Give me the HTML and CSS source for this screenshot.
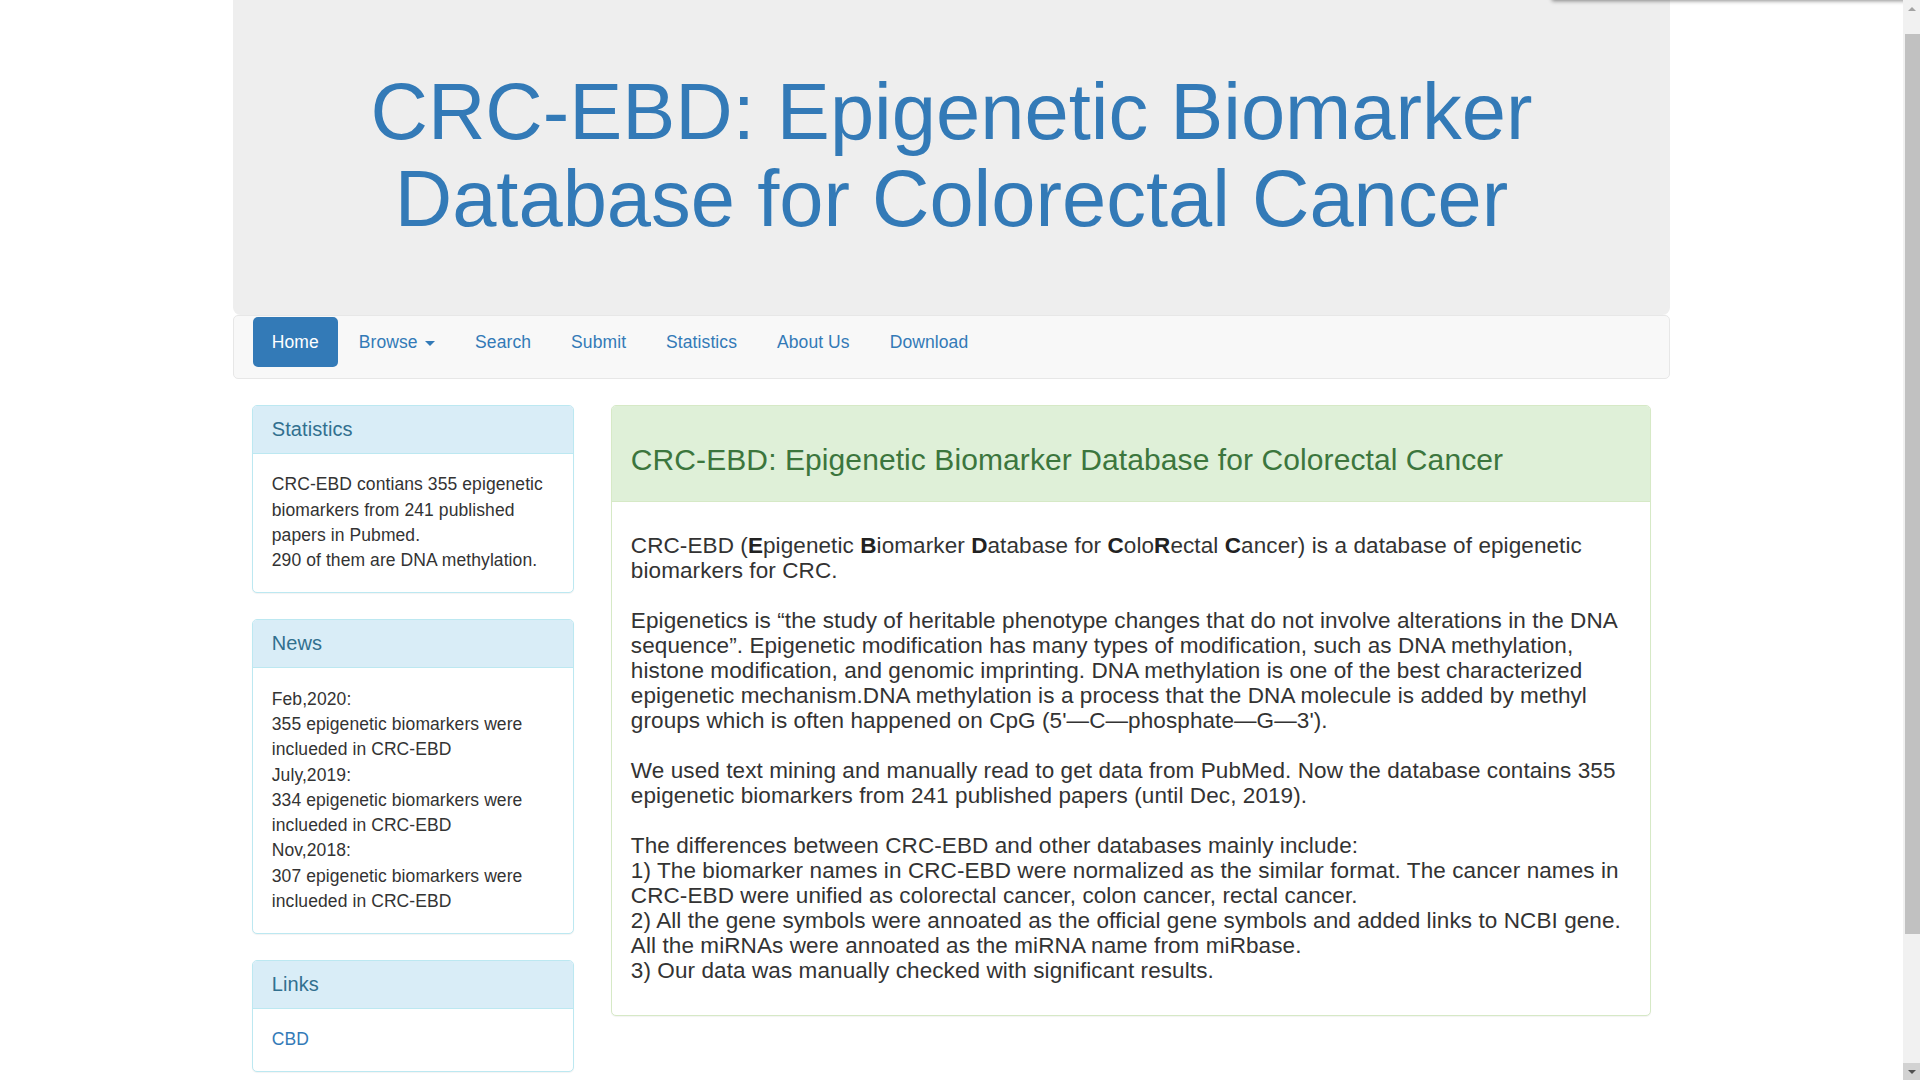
FILE: index.html
```html
<!DOCTYPE html>
<html lang="en">
<head>
<meta charset="utf-8">
<title>CRC-EBD</title>
<link rel="stylesheet" href="styles.css">
</head>
<body>
<div class="viewport">
  <div class="top-shadow"></div>
  <div class="container">
    <div class="jumbotron">
      <h1 class="site-title">CRC-EBD: Epigenetic Biomarker<br>Database for Colorectal Cancer</h1>
    </div>
    <nav class="navbar">
      <ul class="nav-pills">
        <li class="active"><a href="#">Home</a></li>
        <li><a href="#">Browse <span class="caret"></span></a></li>
        <li><a href="#">Search</a></li>
        <li><a href="#">Submit</a></li>
        <li><a href="#">Statistics</a></li>
        <li><a href="#">About Us</a></li>
        <li><a href="#">Download</a></li>
      </ul>
    </nav>
    <div class="row">
      <aside class="sidebar">
        <div class="panel panel-info">
          <div class="panel-heading"><h3 class="panel-title">Statistics</h3></div>
          <div class="panel-body">CRC-EBD contians 355 epigenetic biomarkers from 241 published papers in Pubmed.<br>290 of them are DNA methylation.</div>
        </div>
        <div class="panel panel-info">
          <div class="panel-heading"><h3 class="panel-title">News</h3></div>
          <div class="panel-body">Feb,2020:<br>355 epigenetic biomarkers were inclueded in CRC-EBD<br>July,2019:<br>334 epigenetic biomarkers were inclueded in CRC-EBD<br>Nov,2018:<br>307 epigenetic biomarkers were inclueded in CRC-EBD</div>
        </div>
        <div class="panel panel-info">
          <div class="panel-heading"><h3 class="panel-title">Links</h3></div>
          <div class="panel-body"><a href="#" class="link">CBD</a></div>
        </div>
      </aside>
      <main class="main">
        <div class="panel panel-success">
          <div class="panel-heading main-heading"><h3 class="main-title">CRC-EBD: Epigenetic Biomarker Database for Colorectal Cancer</h3></div>
          <div class="panel-body main-body">
            <p class="intro">CRC-EBD (<b>E</b>pigenetic <b>B</b>iomarker <b>D</b>atabase for <b>C</b>olo<b>R</b>ectal <b>C</b>ancer) is a database of epigenetic biomarkers for CRC.<br><br>Epigenetics is “the study of heritable phenotype changes that do not involve alterations in the DNA sequence”. Epigenetic modification has many types of modification, such as DNA methylation, histone modification, and genomic imprinting. DNA methylation is one of the best characterized epigenetic mechanism.DNA methylation is a process that the DNA molecule is added by methyl groups which is often happened on CpG (5'—C—phosphate—G—3').<br><br>We used text mining and manually read to get data from PubMed. Now the database contains 355 epigenetic biomarkers from 241 published papers (until Dec, 2019).<br><br>The differences between CRC-EBD and other databases mainly include:<br>1) The biomarker names in CRC-EBD were normalized as the similar format. The cancer names in CRC-EBD were unified as colorectal cancer, colon cancer, rectal cancer.<br>2) All the gene symbols were annoated as the official gene symbols and added links to NCBI gene. All the miRNAs were annoated as the miRNA name from miRbase.<br>3) Our data was manually checked with significant results.</p>
          </div>
        </div>
      </main>
    </div>
  </div>
</div>
<div class="scrollbar">
  <div class="sb-btn sb-up"><span class="tri-up"></span></div>
  <div class="sb-track">
    <div class="sb-thumb"></div>
  </div>
  <div class="sb-btn sb-down"><span class="tri-down"></span></div>
</div>
</body>
</html>
```

FILE: styles.css
```css
* { box-sizing: border-box; }
html, body {
  margin: 0;
  padding: 0;
  height: 1080px;
  overflow: hidden;
}
body {
  display: flex;
  font-family: "Liberation Sans", Arial, Helvetica, sans-serif;
  font-size: 17.5px;
  line-height: 25px;
  letter-spacing: 0.005em;
  color: #333;
  background: #fff;
}
.viewport {
  flex: 1;
  position: relative;
  overflow: hidden;
}
.top-shadow {
  position: absolute;
  top: -40px;
  left: 1552px;
  width: 360px;
  height: 40px;
  box-shadow: 0 1px 4px rgba(0,0,0,0.45);
  background: #fff;
}
.container {
  width: 1436.5px;
  margin: 0 auto;
}
.jumbotron {
  background: #eee;
  padding: 69px 0 73px;
  border-radius: 0 0 7.5px 7.5px;
  text-align: center;
}
.site-title {
  margin: 0;
  font-weight: 500;
  font-size: 79.5px;
  line-height: 86.6px;
  letter-spacing: 0;
  color: #337ab7;
}
.navbar {
  background: #f8f8f8;
  border: 1.25px solid #e7e7e7;
  border-radius: 5px;
  height: 63.5px;
  padding: 1px 18.75px 0;
  margin-bottom: 26px;
}
.nav-pills {
  list-style: none;
  margin: 0;
  padding: 0;
  display: flex;
  gap: 2.5px;
}
.nav-pills a {
  display: block;
  padding: 12.5px 18.75px;
  line-height: 25px;
  color: #337ab7;
  text-decoration: none;
  border-radius: 5px;
}
.nav-pills .active a {
  background: #337ab7;
  color: #fff;
}
.caret {
  display: inline-block;
  width: 0;
  height: 0;
  margin-left: 2.5px;
  vertical-align: middle;
  border-top: 5px solid;
  border-left: 5px solid transparent;
  border-right: 5px solid transparent;
}
.row {
  display: flex;
  gap: 37.5px;
  padding: 0 18.75px;
  align-items: flex-start;
}
.sidebar {
  width: 321.6px;
  flex: none;
}
.main {
  flex: 1;
  min-width: 0;
}
.panel {
  background: #fff;
  border: 1.25px solid transparent;
  border-radius: 5px;
  margin-bottom: 25.5px;
  box-shadow: 0 1px 1px rgba(0,0,0,0.05);
}
.panel-heading {
  padding: 12.5px 18.75px;
  border-bottom: 1.25px solid transparent;
  border-radius: 4px 4px 0 0;
}
.panel-title {
  margin: 0;
  font-size: 20px;
  line-height: 22px;
  font-weight: 500;
}
.panel-body {
  padding: 18.75px;
  line-height: 25.3px;
}
.panel-info { border-color: #bce8f1; }
.panel-info > .panel-heading {
  background: #d9edf7;
  color: #31708f;
  border-bottom-color: #bce8f1;
}
.panel-success { border-color: #d6e9c6; }
.panel-success > .panel-heading {
  background: #dff0d8;
  color: #3c763d;
  border-bottom-color: #d6e9c6;
}
.main-title {
  margin: 25px 0 12.5px;
  font-size: 30px;
  line-height: 33px;
  font-weight: 500;
}
.main-body {
  line-height: 25px;
}
.intro {
  margin: 12.5px 0;
  font-size: 22.5px;
  line-height: 25px;
  letter-spacing: 0.004em;
}
.intro b { font-weight: 700; color: #222; }
.link {
  color: #337ab7;
  text-decoration: none;
}
.scrollbar {
  width: 17px;
  flex: none;
  background: #f1f1f1;
  display: flex;
  flex-direction: column;
  height: 1080px;
}
.sb-btn {
  height: 17px;
  flex: none;
  display: flex;
  align-items: center;
  justify-content: center;
}
.sb-down { background: #d2d2d2; }
.sb-track {
  flex: 1;
  padding: 17px 0 0 2px;
}
.sb-thumb {
  height: 900px;
  background: #c1c1c1;
}
.tri-up {
  width: 0; height: 0;
  border-left: 4px solid transparent;
  border-right: 4px solid transparent;
  border-bottom: 4px solid #a3a3a3;
}
.tri-down {
  width: 0; height: 0;
  border-left: 4px solid transparent;
  border-right: 4px solid transparent;
  border-top: 4px solid #505050;
}
```
